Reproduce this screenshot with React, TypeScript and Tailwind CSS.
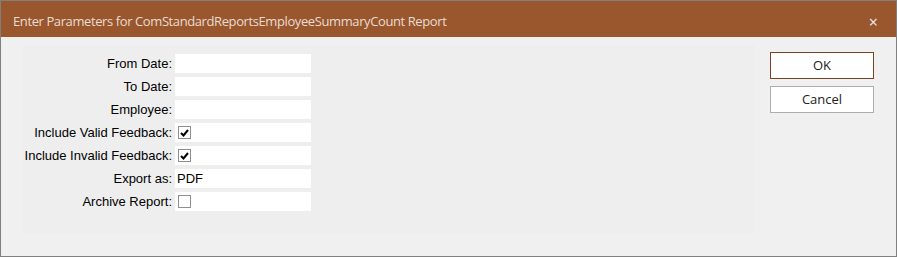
import React from "react";

const Check = () => (
  <svg width="9" height="8" viewBox="0 0 9 8" className="block">
    <path d="M1 4 L3.5 6.5 L8 1" fill="none" stroke="#000" strokeWidth="2" />
  </svg>
);

const Box = ({ checked }: { checked: boolean }) => (
  <div className="ml-[3px] w-[13px] h-[13px] border border-[#8f8f8f] bg-white flex items-center justify-center">
    {checked && <Check />}
  </div>
);

type Row = { label: string; kind: "text" | "check" | "value"; checked?: boolean; value?: string };

const rows: Row[] = [
  { label: "From Date:", kind: "text" },
  { label: "To Date:", kind: "text" },
  { label: "Employee:", kind: "text" },
  { label: "Include Valid Feedback:", kind: "check", checked: true },
  { label: "Include Invalid Feedback:", kind: "check", checked: true },
  { label: "Export as:", kind: "value", value: "PDF" },
  { label: "Archive Report:", kind: "check", checked: false },
];

export default function App() {
  return (
    <div className="w-[897px] h-[257px] border border-[#808080] bg-[#f0f0f0] flex flex-col">
      <div className="h-[36px] bg-[#9a562c] flex items-center pt-[5px] pl-[12px] pr-[18px] text-[#e9dcd3] text-[13px]" style={{ fontFamily: '"Segoe UI", "Open Sans", sans-serif' }}>
        <span className="flex-1 tracking-[-0.4px]">Enter Parameters for ComStandardReportsEmployeeSummaryCount Report</span>
        <span className="text-[16px] leading-none text-[#eee]">×</span>
      </div>
      <div className="flex-1 flex pt-[8px] pl-[22px] pr-[22px]">
        <div className="w-[731px] h-[188px] bg-[#eeeeee] pt-[9px] flex flex-col gap-[4px]" style={{ fontFamily: '"Liberation Sans", Arial, sans-serif' }}>
          {rows.map((r) => (
            <div key={r.label} className="flex items-center h-[19px]">
              <div className="w-[149px] text-right text-[13px] text-black">{r.label}</div>
              <div className="ml-[3px] w-[136px] h-[19px] bg-white flex items-center">
                {r.kind === "check" && <Box checked={!!r.checked} />}
                {r.kind === "value" && <span className="pl-[2px] text-[13px] text-black">{r.value}</span>}
              </div>
            </div>
          ))}
        </div>
        <div className="flex-1 flex flex-col items-end pt-[7px] gap-[7px]" style={{ fontFamily: '"Segoe UI", "Open Sans", sans-serif' }}>
          <button className="w-[104px] h-[27px] bg-white border border-[#7a4424] text-[13px] text-[#222]">OK</button>
          <button className="w-[104px] h-[27px] bg-white border border-[#adadad] text-[13px] text-[#222]">Cancel</button>
        </div>
      </div>
    </div>
  );
}
